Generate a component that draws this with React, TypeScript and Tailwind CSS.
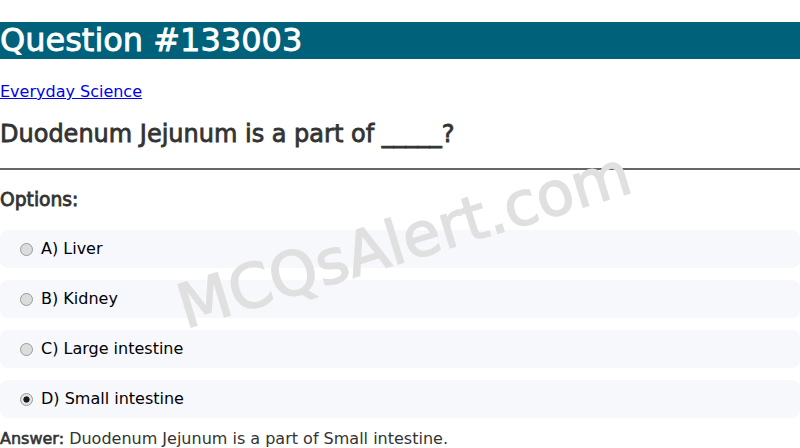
import React from 'react';

const options = [
  { key: 'A', text: 'Liver' },
  { key: 'B', text: 'Kidney' },
  { key: 'C', text: 'Large intestine' },
  { key: 'D', text: 'Small intestine' },
];

// the page's headings are the book face drawn a little heavier
const heavy = 'font-normal [-webkit-text-stroke:0.8px_currentColor]';

export default function App(): JSX.Element {
  const [picked, setPicked] = React.useState('D');
  return (
    <div className="relative h-[448px] overflow-hidden bg-white font-['DejaVu_Sans',sans-serif]">
      <h1
        className={`mt-[22px] bg-[#00617a] text-[32px] leading-[37px] text-white ${heavy}`}
      >
        Question #133003
      </h1>
      <a
        href="#"
        className="mt-[23px] block w-max text-[16px] leading-[19px] text-[#0000ee] underline"
      >
        Everyday Science
      </a>
      <h2
        className={`mt-[19px] text-[24px] leading-[28px] text-[#333] ${heavy}`}
      >
        Duodenum Jejunum is a part of _____?
      </h2>
      <hr className="mt-[20px] border-t-2 border-[#666]" />
      <h3
        className={`mt-[19px] text-[18.7px] leading-[22px] text-[#333] ${heavy}`}
      >
        Options:
      </h3>
      <div className="mt-[19px] flex flex-col gap-[12px]">
        {options.map((option) => (
          <label
            key={option.key}
            className="flex h-[38px] items-center gap-[8px] rounded-lg bg-[#f7f8fc] pl-[20px] text-[16px] text-black"
          >
            <input
              type="radio"
              name="option"
              className="m-0 h-[13px] w-[13px] appearance-none rounded-full border border-[#9a9a9a] bg-[#dcdcdc] checked:bg-[radial-gradient(circle,#1a1a1a_0_2.8px,#e4e4e4_3.4px)]"
              checked={picked === option.key}
              onChange={(): void => setPicked(option.key)}
            />
            {option.key}) {option.text}
          </label>
        ))}
      </div>
      <p className="mt-[11px] text-[16px] leading-[19px] text-[#333]">
        <b className="font-normal [-webkit-text-stroke:0.6px_currentColor]">
          Answer:
        </b>{' '}
        Duodenum Jejunum is a part of Small intestine.
      </p>
      <div className="pointer-events-none absolute inset-0 flex items-center justify-center">
        <span className="mt-[30px] ml-[8px] -rotate-[17deg] text-[61px] leading-none text-[#e0e0e0] [-webkit-text-stroke:1.5px_#e0e0e0]">
          MCQsAlert.com
        </span>
      </div>
    </div>
  );
}
